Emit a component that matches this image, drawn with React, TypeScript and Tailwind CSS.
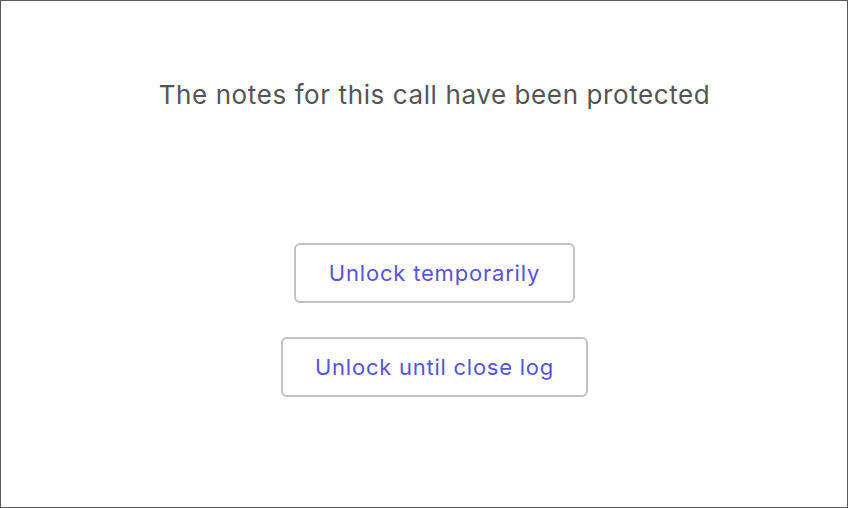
const App = () => {
  return (
    <div className="flex h-[508px] w-[848px] flex-col items-center border border-[#5a5a5a] bg-white pl-[21px] font-['Inter',sans-serif]">
      <h1 className="mt-[78px] text-[26px] leading-8 font-normal tracking-[0.6px] text-[#555555]">
        The notes for this call have been protected
      </h1>
      <div className="mt-[132px] flex flex-col items-center gap-[34px]">
        <button className="box-border h-[60px] rounded-md border-2 border-[#c2c2c2] bg-white px-[33px] text-[22px] tracking-[0.8px] text-[#5656d6]">
          Unlock temporarily
        </button>
        <button className="box-border h-[60px] rounded-md border-2 border-[#c2c2c2] bg-white px-[32px] text-[22px] tracking-[0.75px] text-[#5656d6]">
          Unlock until close log
        </button>
      </div>
    </div>
  );
};

export default App;
